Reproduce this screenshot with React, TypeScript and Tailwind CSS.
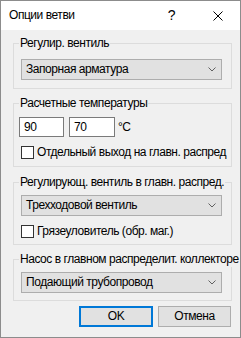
import React from "react";

function Chevron() {
  return (
    <svg width="8" height="5" viewBox="0 0 8 5" className="shrink-0">
      <path d="M0.5 0.5 L4 4 L7.5 0.5" fill="none" stroke="#606060" strokeWidth="1" />
    </svg>
  );
}

function Combo({ value }: { value: string }) {
  return (
    <div className="flex h-[21px] w-[201px] items-center justify-between border border-[#adadad] bg-[#e1e1e1] pl-[4px] pr-[5px]">
      <span>{value}</span>
      <Chevron />
    </div>
  );
}

function Check({ label }: { label: string }) {
  return (
    <div className="flex h-[13px] items-center gap-[3px] pl-[2px]">
      <div className="h-[13px] w-[13px] shrink-0 border border-[#333] bg-white" />
      <span className="whitespace-nowrap">{label}</span>
    </div>
  );
}

function Group({ title, className, children }: { title: string; className?: string; children: React.ReactNode }) {
  return (
    <fieldset className={"min-w-0 w-[219px] border border-[#dcdcdc] pl-[5px] pr-0 " + (className || "")}>
      <legend className="h-[16px] whitespace-nowrap px-[1px] leading-[16px]">{title}</legend>
      {children}
    </fieldset>
  );
}

export default function App() {
  return (
    <div
      className="flex h-[338px] w-[241px] flex-col overflow-hidden border border-[#8c8c8c] bg-[#f0f0f0] text-[12px] leading-[15px] tracking-[-0.45px] text-black"
      style={{ fontFamily: '"Liberation Sans", Arial, sans-serif' }}
    >
      {/* title bar */}
      <div className="flex h-[29px] shrink-0 items-center bg-white pl-[8px]">
        <span className="flex-1">Опции ветви</span>
        <span className="mr-[38px] text-[14px]">?</span>
        <svg width="10" height="10" viewBox="0 0 10 10" className="mr-[17px]">
          <path d="M0.5 0.5 L9.5 9.5 M9.5 0.5 L0.5 9.5" stroke="#000" strokeWidth="1" />
        </svg>
      </div>

      <div className="flex flex-col pl-[12px]">
        <Group title="Регулир. вентиль" className="mt-[5px] pb-[8px]">
          <div className="mt-[8px] pl-[2px]">
            <Combo value="Запорная арматура" />
          </div>
        </Group>

        <Group title="Расчетные температуры" className="mt-[6px] pb-[7px]">
          <div className="mt-[6px] flex items-center">
            <div className="flex h-[20px] w-[45px] items-center border border-[#7a7a7a] bg-white pl-[4px]">90</div>
            <div className="ml-[5px] flex h-[20px] w-[46px] items-center border border-[#7a7a7a] bg-white pl-[4px]">70</div>
            <span className="ml-[3px]">°C</span>
          </div>
          <div className="mt-[9px]">
            <Check label="Отдельный выход на главн. распред" />
          </div>
        </Group>

        <Group title="Регулирующ. вентиль в главн. распред." className="mt-[7px] pb-[6px]">
          <div className="mt-[5px] pl-[2px]">
            <Combo value="Трехходовой вентиль" />
          </div>
          <div className="mt-[9px]">
            <Check label="Грязеуловитель (обр. маг.)" />
          </div>
        </Group>

        <Group title="Насос в главном распределит. коллекторе" className="mt-[6px] pb-[7px]">
          <div className="mt-[5px] pl-[2px]">
            <Combo value="Подающий трубопровод" />
          </div>
        </Group>

        <div className="mt-[5px] flex gap-[5px] pl-[66px]">
          <button className="flex h-[21px] w-[74px] items-center justify-center border-2 border-[#0078d7] bg-[#e1e1e1]">
            OK
          </button>
          <button className="flex h-[21px] w-[73px] items-center justify-center border border-[#adadad] bg-[#e1e1e1]">
            Отмена
          </button>
        </div>
      </div>
    </div>
  );
}
